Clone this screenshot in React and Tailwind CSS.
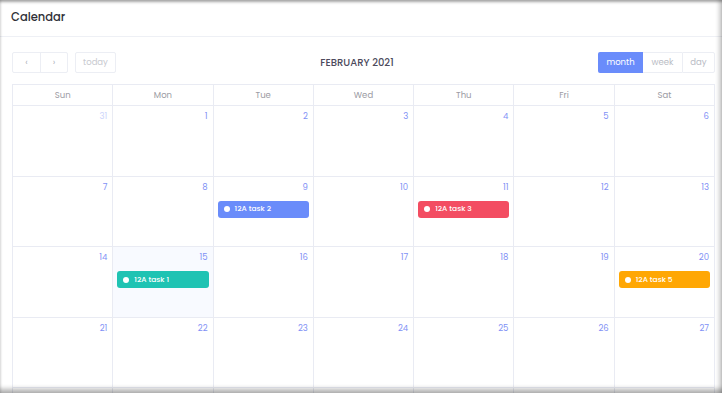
import React from "react";

const days = ["Sun", "Mon", "Tue", "Wed", "Thu", "Fri", "Sat"];

// the fifth week runs past the bottom edge, so its numbers are left out
const weeks = [
  [31, 1, 2, 3, 4, 5, 6],
  [7, 8, 9, 10, 11, 12, 13],
  [14, 15, 16, 17, 18, 19, 20],
  [21, 22, 23, 24, 25, 26, 27],
  [null, null, null, null, null, null, null],
];

// week index - day index -> event
const events = {
  "1-2": { title: "12A task 2", color: "bg-[#6a8cfa]" },
  "1-4": { title: "12A task 3", color: "bg-[#f34d62]" },
  "2-1": { title: "12A task 1", color: "bg-[#1fc3b3]" },
  "2-6": { title: "12A task 5", color: "bg-[#ffa704]" },
};

export default function App() {
  return (
    <div
      className="relative h-[393px] w-[722px] overflow-hidden bg-white text-[#333]"
      style={{ fontFamily: "Poppins, Inter, 'Noto Sans', sans-serif" }}
    >
      <div className="flex h-[37px] items-center border-b border-[#eef0f5] px-[11px]">
        <h1 className="text-[11.5px] font-medium text-[#2f2f37]">Calendar</h1>
      </div>

      <div className="pl-[12px] pr-[7px] pt-[15px]">
        <div className="flex h-[21px] items-center justify-between">
          <div className="flex h-full items-center">
            <div className="flex h-full rounded-[2px] border border-[#eceef4]">
              <button className="flex w-[27px] items-center justify-center text-[9px] text-[#b0b3bd]">‹</button>
              <button className="flex w-[27px] items-center justify-center border-l border-[#eceef4] text-[9px] text-[#b0b3bd]">›</button>
            </div>
            <button className="ml-[7px] flex h-full w-[41px] items-center justify-center rounded-[2px] border border-[#eceef4] text-[8.5px] text-[#c8cad0]">
              today
            </button>
          </div>
          <h2 className="text-[10px] font-medium text-[#4c4a5c]">FEBRUARY 2021</h2>
          <div className="flex h-full items-stretch">
            <button className="flex w-[45px] items-center justify-center rounded-l-[2px] bg-[#6a8cfb] text-[8.5px] text-white">
              month
            </button>
            <button className="flex w-[39px] items-center justify-center border-y border-[#eceef4] text-[8.5px] text-[#b9bcc5]">
              week
            </button>
            <button className="flex w-[33px] items-center justify-center rounded-r-[2px] border border-[#eceef4] text-[8.5px] text-[#b9bcc5]">
              day
            </button>
          </div>
        </div>

        <div className="mt-[11px] border-l border-t border-[#e9ebf3]">
          <div className="grid h-[21px] grid-cols-7">
            {days.map((d) => (
              <div
                key={d}
                className="flex items-center justify-center border-b border-r border-[#e9ebf3] text-[8.5px] text-[#9b9ba3]"
              >
                {d}
              </div>
            ))}
          </div>
          {weeks.map((week, w) => (
            <div key={w} className="grid h-[70.5px] grid-cols-7">
              {week.map((n, d) => {
                const ev = events[`${w}-${d}`];
                const today = w === 2 && d === 1;
                return (
                  <div
                    key={d}
                    className={`border-b border-r border-[#e9ebf3] ${today ? "bg-[#f8faff]" : ""}`}
                  >
                    {n !== null && (
                      <div
                        className={`pr-[5px] pt-[4px] text-right text-[8.5px] leading-[12px] ${
                          w === 0 && d === 0 ? "text-[#cdd5fb]" : "text-[#7f91f5]"
                        }`}
                      >
                        {n}
                      </div>
                    )}
                    {ev && (
                      <div
                        className={`mx-[4px] mt-[8px] flex h-[17px] items-center gap-[5px] rounded-[3px] px-[6px] text-[7.5px] font-medium text-white ${ev.color}`}
                      >
                        <span className="h-[6px] w-[6px] rounded-full bg-white" />
                        {ev.title}
                      </div>
                    )}
                  </div>
                );
              })}
            </div>
          ))}
        </div>
      </div>

      <div className="pointer-events-none absolute inset-0 shadow-[inset_0_3px_3px_-1px_rgba(0,0,0,0.35),inset_-5px_0_4px_-2px_rgba(0,0,0,0.2),inset_0_-7px_5px_-3px_rgba(0,0,0,0.3),inset_3px_0_3px_-2px_rgba(0,0,0,0.08)]" />
    </div>
  );
}
